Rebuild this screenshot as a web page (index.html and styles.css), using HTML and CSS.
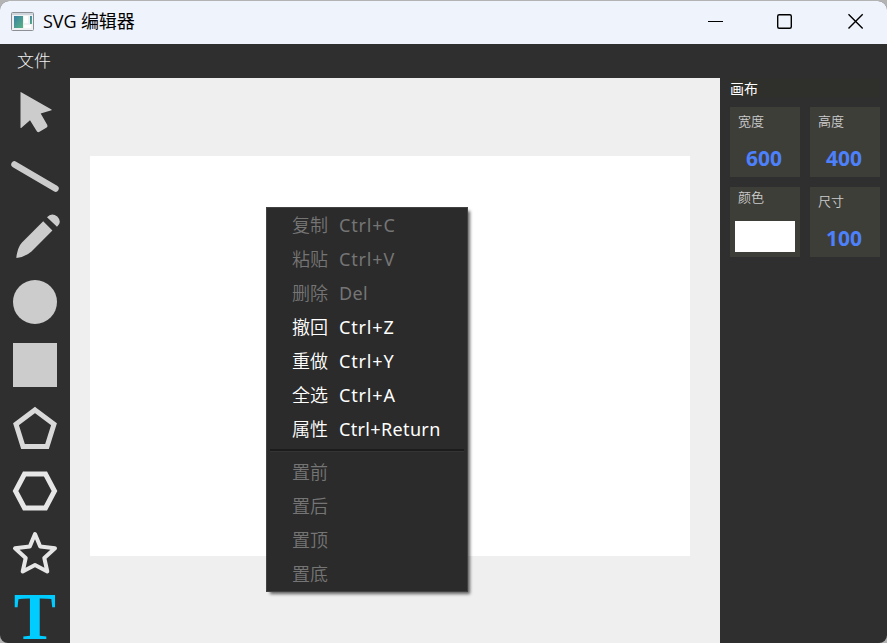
FILE: index.html
```html
<!DOCTYPE html>
<html lang="zh-CN">
<head>
<meta charset="utf-8">
<title>SVG 编辑器</title>
<link rel="stylesheet" href="styles.css">
</head>
<body>
<div class="window">
  <header class="titlebar">
    <svg class="app-icon" width="23" height="19" viewBox="0 0 23 19">
      <defs><linearGradient id="g" x1="0" y1="0" x2="1" y2="1"><stop offset="0" stop-color="#3b7fa6"/><stop offset="1" stop-color="#58b581"/></linearGradient></defs>
      <rect x=".5" y=".5" width="22" height="18" rx="1" fill="#f0f1f2" stroke="#8c9096"/>
      <rect x="1" y="1" width="21" height="2" fill="#cfd5db"/>
      <rect x="3" y="4" width="9" height="12" fill="url(#g)"/>
      <rect x="13" y="4" width="4" height="7" fill="#fff"/>
      <rect x="19" y="4" width="2" height="8" fill="url(#g)"/>
      <rect x="13" y="13" width="7" height="3" fill="#fff"/>
    </svg>
    <h1 class="title">SVG 编辑器</h1>
    <svg class="controls" width="156" height="16" viewBox="0 0 156 16" fill="none" stroke="#000">
      <path d="M0 8.5h15"/>
      <rect x="69.700" y="1.700" width="13.600" height="13.600" rx="1.500" stroke-width="1.400"/>
      <path d="M140.500 1.200l14.200 14.200M154.700 1.200l-14.200 14.200" stroke-width="1.400"/>
    </svg>
  </header>
  <nav class="menubar"><span>文件</span></nav>
  <div class="workspace">
    <aside class="tools">
      <svg class="tool" viewBox="0 0 50 50"><path d="M10.500 4.300Q10.600 3.800 11.200 4.200L41.500 21.600Q42 22 41.500 22.300L30.700 25.500L37.300 37Q38 38.500 36.700 39.500L29.500 43.800Q28 44.700 26.800 43.300L20 32.300L11.200 40Q10.500 40.300 10.500 39.500Z"/></svg>
      <svg class="tool" viewBox="0 0 50 50"><path class="line" d="M4.500 13.500L45.500 37.500"/></svg>
      <svg class="tool" viewBox="0 0 50 50"><path d="M33.200 7.200L42.400 16.500L21.500 37.500Q15 43 6.500 44Q6 43 7.500 37.500Q9 31.500 12 28.500ZM37 3.300Q41.500-2 47.300 2.500Q52.500 8 47 12.800Z"/></svg>
      <svg class="tool" viewBox="0 0 50 50"><circle cx="25" cy="25" r="22"/></svg>
      <svg class="tool" viewBox="0 0 50 50"><path d="M3 3h44v44H3z"/></svg>
      <svg class="tool" viewBox="0 0 50 50"><path class="pentagon" d="M25 7L44 21.300L37 43.500H13L6 21.300Z"/></svg>
      <svg class="tool" viewBox="0 0 50 50"><path class="hexagon" d="M14.500 8H35.500L44.500 25L35.500 42H14.500L5.500 25Z"/></svg>
      <svg class="tool" viewBox="0 0 50 50"><path class="star" d="M25 5L30.200 17.600L45 19.300L34.300 29L37.300 42.500L25 36L12.700 42.500L15.700 29L5 19.300L19.800 17.600Z"/></svg>
      <div class="tool text-tool">T</div>
    </aside>
    <main class="stage">
      <div class="canvas"></div>
      <div class="context-menu">
        <div class="item disabled"><span>复制</span><span class="keys">Ctrl+C</span></div>
        <div class="item disabled"><span>粘贴</span><span class="keys">Ctrl+V</span></div>
        <div class="item disabled"><span>删除</span><span class="keys word">Del</span></div>
        <div class="item"><span>撤回</span><span class="keys">Ctrl+Z</span></div>
        <div class="item"><span>重做</span><span class="keys">Ctrl+Y</span></div>
        <div class="item"><span>全选</span><span class="keys">Ctrl+A</span></div>
        <div class="item"><span>属性</span><span class="keys word">Ctrl+Return</span></div>
        <div class="separator"></div>
        <div class="item disabled"><span>置前</span></div>
        <div class="item disabled"><span>置后</span></div>
        <div class="item disabled"><span>置顶</span></div>
        <div class="item disabled"><span>置底</span></div>
      </div>
    </main>
    <aside class="panel">
      <h2 class="panel-title">画布</h2>
      <div class="cards">
        <div class="card"><span class="label">宽度</span><b class="value">600</b></div>
        <div class="card"><span class="label">高度</span><b class="value">400</b></div>
        <div class="card color-card"><span class="label">颜色</span><i class="swatch"></i></div>
        <div class="card"><span class="label">尺寸</span><b class="value">100</b></div>
      </div>
    </aside>
  </div>
</div>
</body>
</html>
```
FILE: styles.css
```css
* { box-sizing: border-box; }
body { margin: 0; background: #b3b3b4; font-family: "Noto Sans", "Noto Sans CJK SC", sans-serif; overflow: hidden; }
.window { height: 642px; margin-top: 1px; border-radius: 9px 9px 8px 8px; overflow: hidden; background: #2f2f2f; display: flex; flex-direction: column; }
.titlebar { height: 43px; flex: none; display: flex; align-items: center; background: #eff3fb; padding: 0 23px 3px 11px; }
.title { margin: 0 0 0 9px; font: 400 18px/24px "Open Sans", "Noto Sans CJK SC", sans-serif; letter-spacing: -.1px; color: #000; }
.controls { margin-left: auto; }
.menubar { height: 34px; flex: none; padding-left: 17px; color: #eee; font: 300 17px/32px "Noto Sans CJK SC", sans-serif; }
.workspace { flex: 1; min-height: 0; display: flex; }
.tools { width: 70px; flex: none; padding-top: 10px; display: flex; flex-direction: column; align-items: center; gap: 13px; }
.tool { width: 50px; height: 50px; flex: none; fill: #ccc; }
.line { stroke: #ccc; stroke-width: 6.500; stroke-linecap: round; }
.pentagon { fill: none; stroke: #d9d9d9; stroke-width: 5; }
.hexagon { fill: none; stroke: #e6e6e6; stroke-width: 5; }
.star { fill: none; stroke: #e6e6e6; stroke-width: 4; stroke-linejoin: round; }
.text-tool { color: #0cf; font: 700 66px/49px "Liberation Serif", serif; text-align: center; transform: scale(.96, 1.01); }
.stage { width: 650px; flex: none; position: relative; background: #efefef; padding: 78px 20px; }
.canvas { width: 600px; height: 400px; background: #fff; }
.context-menu { position: absolute; left: 196px; top: 129px; width: 202px; height: 385px; border: 1px solid #424242; background: #2b2b2b; color: #fff; box-shadow: 3px 3px 3px -1px rgba(0,0,0,.6); }
.item { height: 34px; display: flex; gap: 11px; padding-left: 25px; font-size: 18px; font-weight: 350; line-height: 34px; white-space: nowrap; }
.keys { font-weight: 400; letter-spacing: .85px; }
.keys.word { letter-spacing: .35px; }
.disabled { color: #757575; }
.separator { height: 9px; margin: 0 3px; padding-top: 3px; }
.separator::before { content: ""; display: block; height: 2px; background: #1c1c1c; border-bottom: 1px solid #343434; }
.panel { flex: 1; padding: 0 7px 0 10px; }
.panel-title { height: 20px; margin: 0 0 9px; font: 400 14px/20px "Noto Sans CJK SC", sans-serif; color: #fff; background: #2f2f2b; }
.cards { display: grid; grid-template-columns: 70px 70px; gap: 10px; }
.card { height: 70px; padding: 4px 8px 0; background: #3e3e39; display: flex; flex-direction: column; }
.label { font: 350 13px/20px "Noto Sans CJK SC", sans-serif; color: #ccc; }
.value { margin: 12px 2px 0 0; font: 700 21px/30px "Open Sans", sans-serif; text-align: center; color: #4d80fb; }
.color-card { padding: 0 5px; }
.color-card .label { padding-left: 3px; }
.swatch { height: 31px; margin-top: 14px; background: #fff; }
```
